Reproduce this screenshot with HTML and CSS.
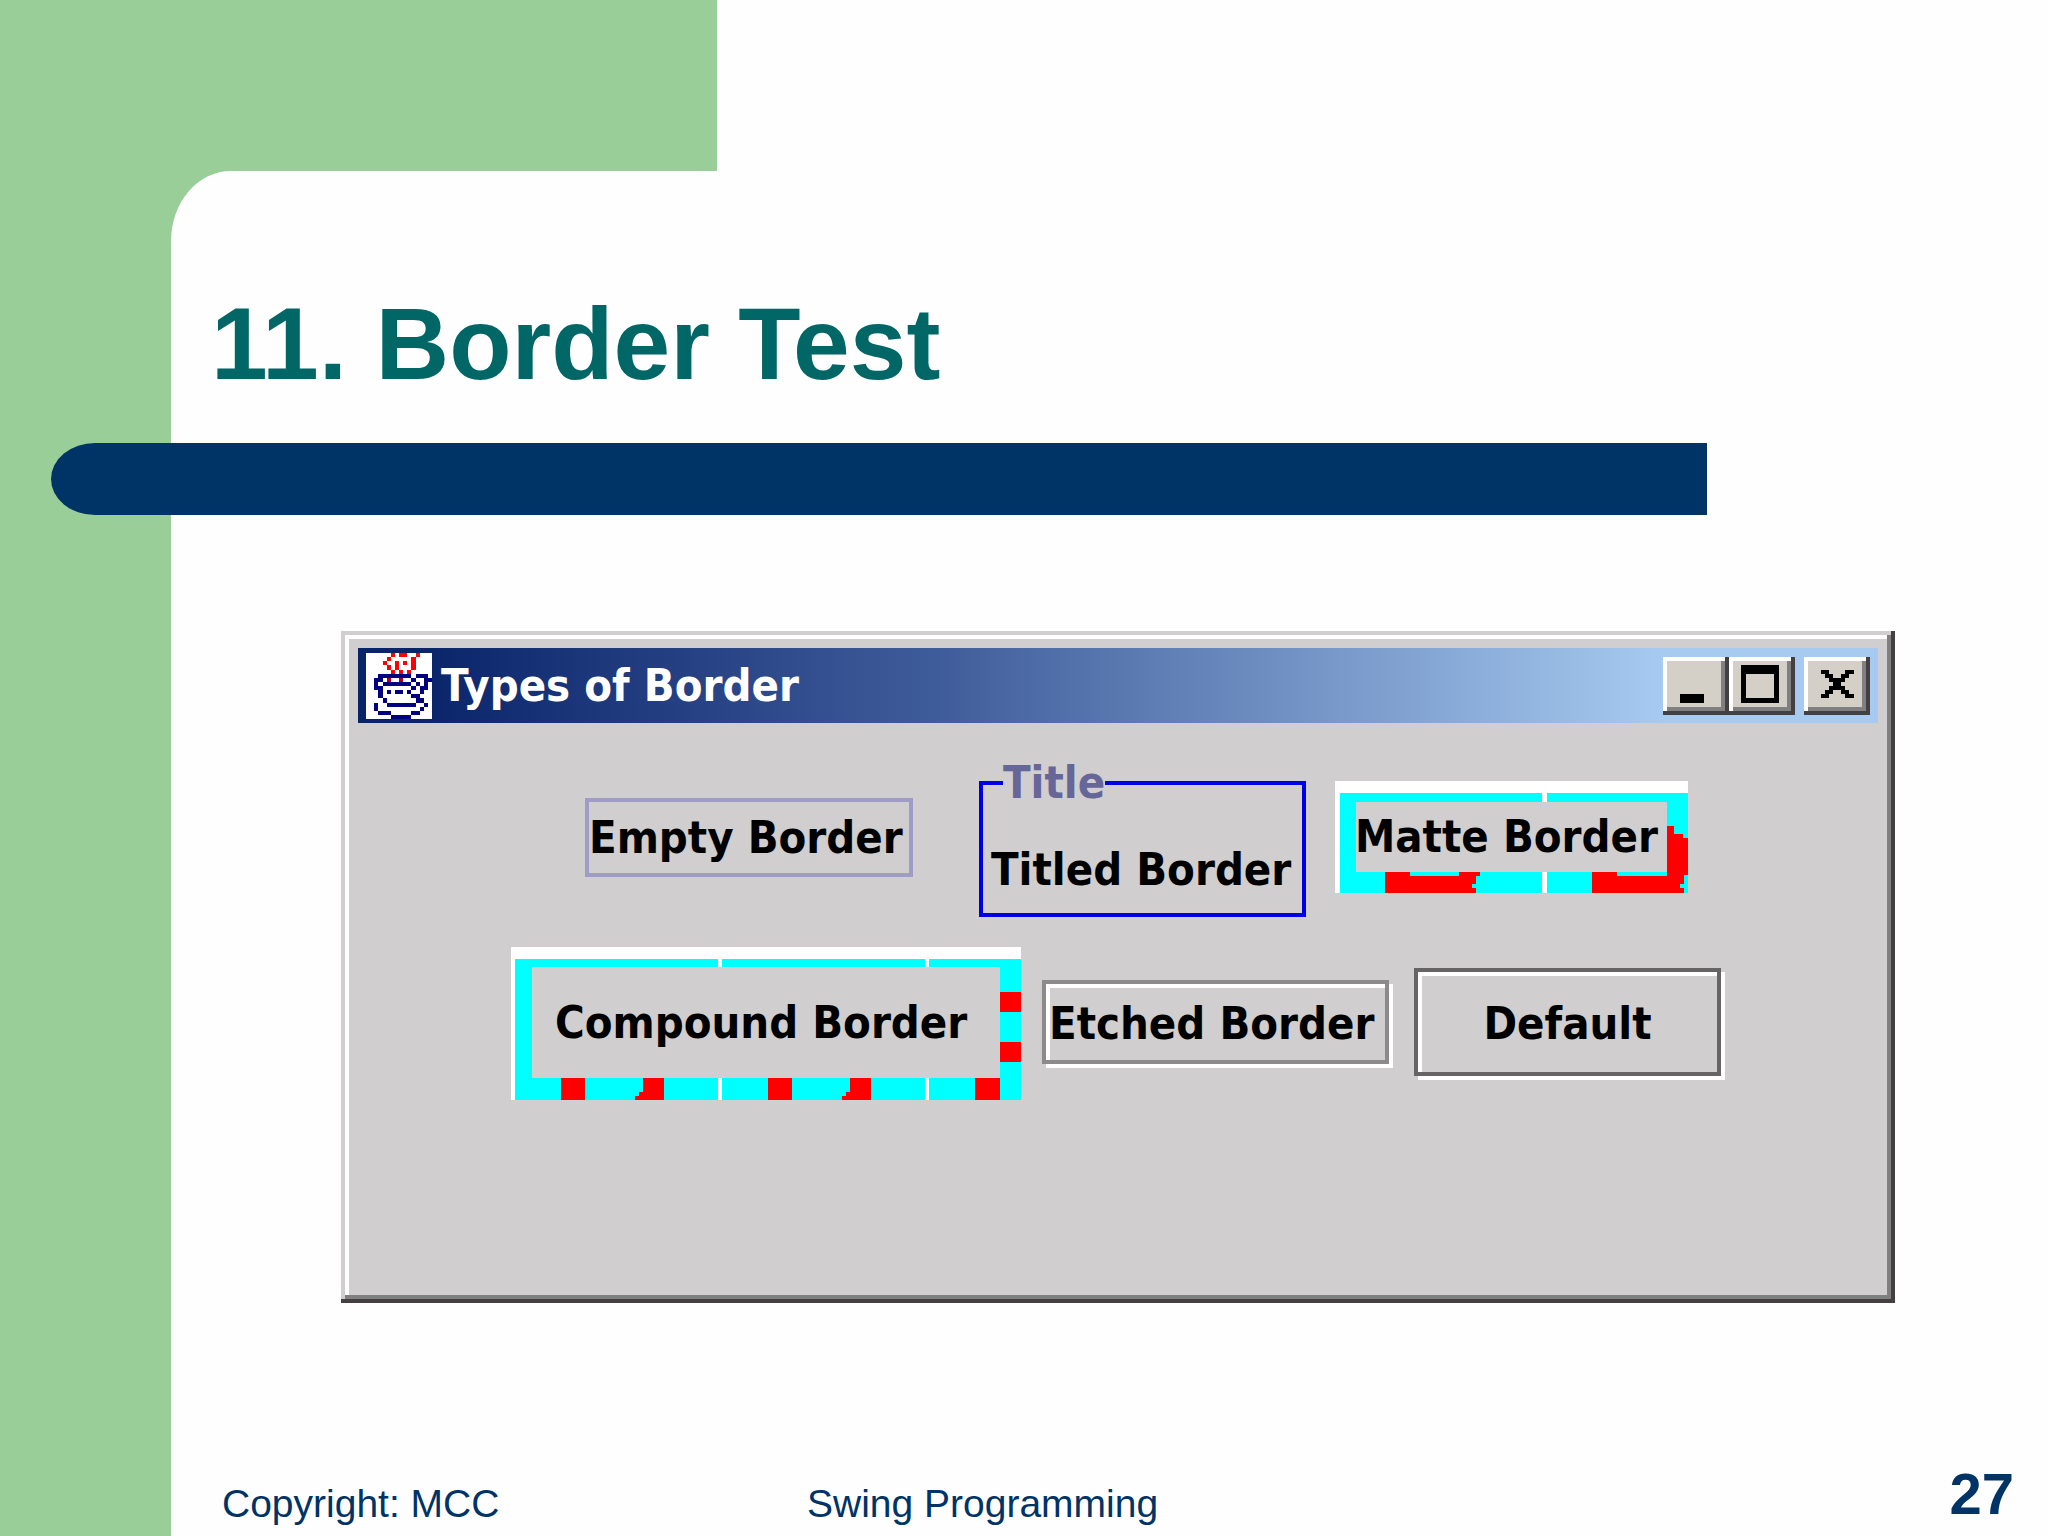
FILE: index.html
```html
<!DOCTYPE html>
<html lang="en">
<head>
<meta charset="utf-8">
<title>11. Border Test</title>
<link rel="stylesheet" href="styles.css">
</head>
<body>
<div class="slide">
  <div class="top-band"></div>
  <main class="page">
    <h1 class="title">11. Border Test</h1>
    <div class="rule"></div>

    <section class="window" aria-label="Types of Border">
      <header class="titlebar">
        <svg class="app-icon" viewBox="0 0 16 16" shape-rendering="crispEdges" aria-hidden="true">
          <rect width="16" height="16" fill="#fff"/>
          <path stroke="#000080" d="M3 5.5h8M12 5.5h3M2 6.5h2M11 6.5h1M14 6.5h2M2 7.5h1M4 7.5h7M12 7.5h1M14 7.5h1M2 8.5h2M11 8.5h1M13 8.5h2M3 9.5h1M5 9.5h1M7 9.5h2M10 9.5h1M13 9.5h1M3 10.5h1M11 10.5h2M4 11.5h1M12 11.5h2M2 12.5h1M5 12.5h7M14 12.5h1M2 13.5h1M13 13.5h1M3 14.5h3M11 14.5h2M6 15.5h5"/>
          <path stroke="#f00" d="M6 .5h1M8 .5h2M12 .5h1M5 1.5h1M11 1.5h1M4 2.5h1M7 2.5h1M9 2.5h1M11 2.5h1M5 3.5h1M7 3.5h1M11 3.5h1M6 4.5h1M8 4.5h1M10 4.5h1"/>
          <path stroke="#b00020" d="M5 6.5h1M8 6.5h1"/>
        </svg>
        <h2 class="caption">Types of Border</h2>
        <div class="controls">
          <button class="control" aria-label="Minimize">
            <svg viewBox="0 0 16 14" shape-rendering="crispEdges"><path d="M4 9h6v2H4z"/></svg>
          </button>
          <button class="control" aria-label="Maximize">
            <svg viewBox="0 0 16 14" shape-rendering="crispEdges"><path fill-rule="evenodd" d="M3 2h9v9H3zM4 4v6h7V4z"/></svg>
          </button>
          <button class="control control-close" aria-label="Close">
            <svg viewBox="0 0 16 14" shape-rendering="crispEdges"><path d="M4 3h2v1h1v1h2V4h1V3h2v1h-1v1h-1v1H9v1h1v1h1v1h1v1h-2V9H9V8H7v1H6v1H4V9h1V8h1V7h1V6H6V5H5V4H4z"/></svg>
          </button>
        </div>
      </header>

      <div class="client">
        <div class="row">
          <button class="sample empty">Empty Border</button>
          <fieldset class="titled">
            <legend>Title</legend>
            <button class="sample">Titled Border</button>
          </fieldset>
          <button class="sample matte">
            <svg viewBox="0 0 353 112" preserveAspectRatio="none" shape-rendering="crispEdges" aria-hidden="true">
              <path fill="#fff" d="M0 0h353v112H0z"/>
              <path fill="#0ff" d="M5 12h202v100H5zM212 12h141v100H212z"/>
              <path fill="#f00" d="M50 91h25v4h49v-4h21v4h-4v8h-4v4h4v5H50zM257 91h25v4h50V45h7v8h9v4h5v37h-4v9h-4v4h4v5h-92z"/>
              <path fill="#d0cecf" d="M21 21h311v70H21z"/>
            </svg>
            <span>Matte Border</span>
          </button>
        </div>
        <div class="row">
          <button class="sample matte compound">
            <svg viewBox="0 0 510 153" preserveAspectRatio="none" shape-rendering="crispEdges" aria-hidden="true">
              <path fill="#fff" d="M0 0h510v153H0z"/>
              <path fill="#0ff" d="M4 12h203v141H4zM211 12h203v141H211zM418 12h92v141h-92z"/>
              <path fill="#f00" d="M50 131h24v22H50zM132 131h21v22h-29v-4h4v-4h4zM257 131h24v22h-24zM339 131h21v22h-29v-4h4v-4h4zM464 131h25v22h-25zM489 45h21v20h-21zM489 95h21v20h-21z"/>
              <path fill="#d0cecf" d="M21 20h468v111H21z"/>
            </svg>
            <span>Compound Border</span>
          </button>
          <button class="sample etched">Etched Border</button>
          <button class="sample default">Default</button>
        </div>
      </div>
    </section>

    <footer class="footer">
      <span>Copyright: MCC</span>
      <span>Swing Programming</span>
      <strong class="page-number">27</strong>
    </footer>
  </main>
</div>
</body>
</html>
```
FILE: styles.css
```css
* {
  box-sizing: border-box;
}

body {
  margin: 0;
  background: #fff;
  color: #003366;
  font-family: "Liberation Sans", Arial, sans-serif;
}

.slide {
  display: flex;
  flex-direction: column;
  min-height: 100vh;
  background: #99ce98;
}

.top-band {
  height: 171px;
  margin-left: 35%;
  background: #fefefe;
}

.page {
  display: flex;
  flex: 1;
  flex-direction: column;
  margin-left: 171px;
  padding-top: 113px;
  background: #fefefe;
  border-top-left-radius: 60px 70px;
}

.title {
  margin: 0 0 39px 40px;
  color: #006666;
  font-size: 102px;
  line-height: 120px;
}

.rule {
  height: 72px;
  margin: 0 341px 0 -120px;
  background: #003366;
  border-radius: 44px 0 0 44px / 36px 0 0 36px;
}

/* Window frame */

.window {
  display: flex;
  flex-direction: column;
  min-height: 672px;
  margin: 116px 153px 0 170px;
  padding: 17px;
  background: #d0cecf;
  box-shadow:
    inset -4px -4px #444041,
    inset 4px 4px #d0cecf,
    inset -8px -8px #808080,
    inset 8px 8px #fff;
  color: #000;
  font-family: "DejaVu Sans Condensed", "DejaVu Sans", Tahoma, sans-serif;
  font-size: 45px;
  font-weight: bold;
  line-height: 52px;
}

.titlebar {
  display: flex;
  align-items: center;
  height: 75px;
  padding: 0 8px;
  background: linear-gradient(to right, #0a246a 4%, #3f5c9a 38%, #a6caf0 86%);
}

.app-icon {
  width: 66px;
  height: 66px;
}

.caption {
  flex: 1;
  margin: 0 0 0 9px;
  color: #fff;
  font-size: 45px;
}

.controls {
  display: flex;
}

.control {
  width: 66px;
  height: 58px;
  padding: 0;
  border: 0;
  background: #d4d0c8;
  box-shadow:
    inset -4px -4px #444041,
    inset 4px 4px #fff,
    inset -8px -8px #808080;
}

.control svg {
  display: block;
  width: 100%;
  height: 100%;
}

.control-close {
  margin-left: 9px;
}

/* Border samples */

.client {
  display: flex;
  flex-direction: column;
  gap: 30px;
  padding-top: 34px;
}

.row {
  display: flex;
  justify-content: center;
  align-items: center;
  gap: 21px;
}

.sample {
  padding: 0;
  border: 0;
  background: none;
  color: inherit;
  font: inherit;
  text-align: left;
  white-space: nowrap;
}

.empty {
  width: 328px;
  margin: 0 41px 0 37px;
  padding: 10px 0 9px;
  border: 4px solid #a09cc8;
}

.titled {
  width: 327px;
  margin: 0 8px 0 4px;
  padding: 35px 8px 17px;
  border: 4px solid #0000e6;
}

.titled legend {
  margin-left: 12px;
  padding: 0;
  color: #666699;
}

.titled .sample {
  display: block;
}

.matte {
  display: grid;
  width: 353px;
  height: 112px;
}

.matte > * {
  grid-area: 1 / 1;
}

.matte svg {
  width: 100%;
  height: 100%;
}

.matte span {
  padding: 30px 0 0 20px;
}

.compound {
  width: 510px;
  height: 153px;
}

.compound span {
  padding: 50px 0 0 44px;
}

.etched {
  width: 347px;
  margin: 0 4px 4px 0;
  padding: 14px 0 10px 3px;
  border: 4px solid #8c8a8b;
  box-shadow: 4px 4px #fff, inset 4px 4px #fff;
}

.default {
  width: 307px;
  margin: 0 4px 4px 0;
  padding: 26px 0 22px;
  border: 4px solid #666465;
  box-shadow: 4px 4px #fff, inset 4px 4px #fff;
  text-align: center;
}

/* Slide footer */

.footer {
  display: grid;
  grid-template-columns: 585px 1fr auto;
  align-items: end;
  margin-top: auto;
  padding: 0 34px 10px 51px;
  font-size: 39px;
  line-height: 44px;
}

.page-number {
  font-size: 58px;
  line-height: 64px;
}
```
